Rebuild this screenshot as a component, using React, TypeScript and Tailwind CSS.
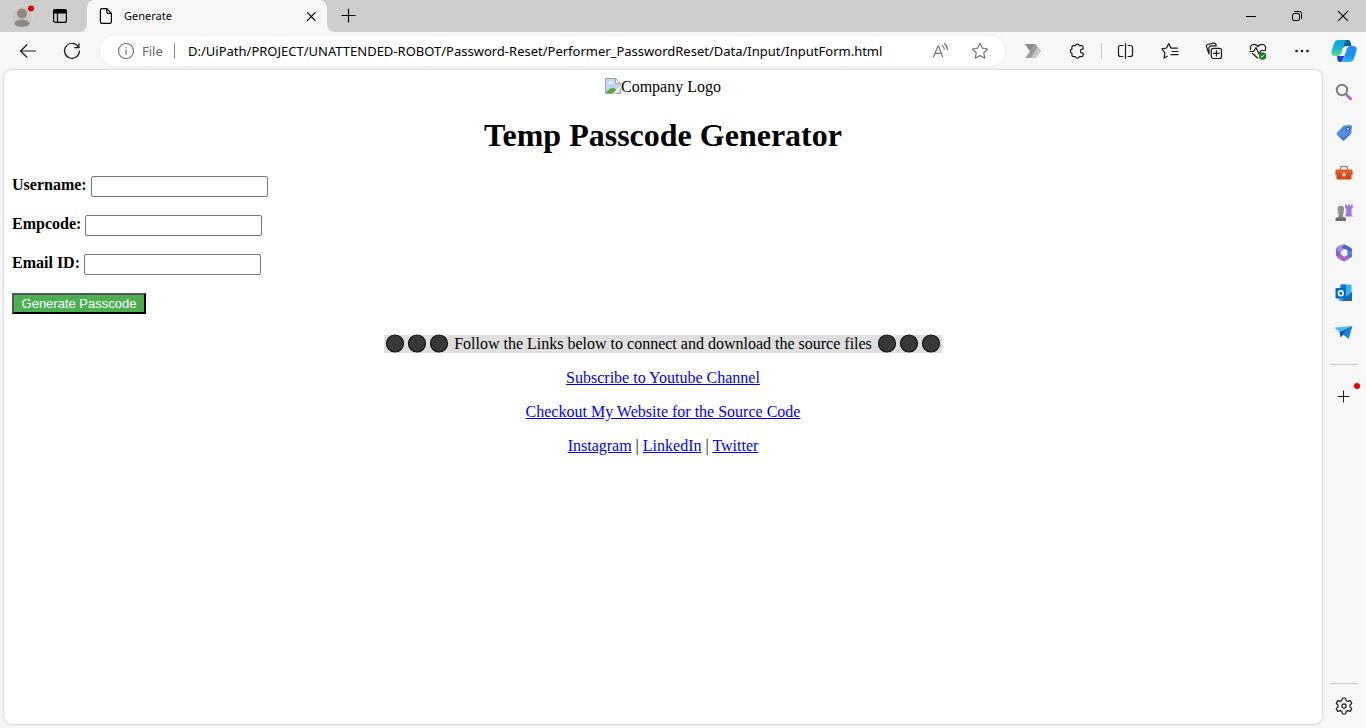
import type { ReactNode } from "react";

type IconProps = { children: ReactNode; size?: string; box?: string; className?: string };

function Icon({ children, size = "size-5", box = "0 0 20 20", className = "" }: IconProps) {
  return (
    <svg
      viewBox={box}
      className={`${size} shrink-0 ${className}`}
      fill="none"
      stroke="currentColor"
      strokeWidth="1.2"
      strokeLinecap="round"
      strokeLinejoin="round"
      aria-hidden="true"
    >
      {children}
    </svg>
  );
}

function IconButton({ label, className = "h-8 w-11", children }: { label: string; className?: string; children: ReactNode }) {
  return (
    <button type="button" aria-label={label} className={`flex shrink-0 items-center justify-center ${className}`}>
      {children}
    </button>
  );
}

function TabStrip() {
  return (
    <header className="flex h-8 shrink-0 bg-[#f7f7f7] text-black">
      <div className="flex w-[87px] shrink-0 items-center rounded-br-lg bg-[#cdcdcd] pl-2.5">
        <IconButton label="Profile" className="size-6">
          <Icon size="size-6" box="0 0 24 24">
            <circle cx="12" cy="12.500" r="10.500" fill="#c9c6c3" stroke="#d8d4cf" strokeWidth="1" />
            <circle cx="12" cy="9.500" r="5" fill="#8e8985" stroke="none" />
            <path d="M4 20c1-3 4-4.500 8-4.500s7 1.500 8 4.500c-2 2-5 3-8 3s-6-1-8-3z" fill="#8e8985" stroke="none" />
            <circle cx="21" cy="4.500" r="3" fill="#e60000" stroke="none" />
          </Icon>
        </IconButton>
        <IconButton label="Tab actions" className="ml-4 size-5">
          <Icon>
            <rect x="3.600" y="3.600" width="12.800" height="12.800" rx="2" />
            <path d="M3.600 5.500q0-2 2-2h8.800q2 0 2 2v1.500H3.600z" fill="currentColor" />
            <path d="M7.500 7v9" />
          </Icon>
        </IconButton>
      </div>
      <div className="w-60 shrink-0 bg-[#cdcdcd]">
        <div className="flex h-8 items-center rounded-t-lg bg-[#f7f7f7] pr-1.5 pl-2">
          <Icon size="size-[22px]" box="0 0 22 22">
            <path d="M7 3.600h4.800l4.600 4.800v8.400q0 1.600-1.600 1.600H7q-1.600 0-1.600-1.600V5.200q0-1.600 1.600-1.600z" />
            <path d="M11.800 3.800v3.400q0 1.200 1.200 1.200h3.200" />
          </Icon>
          <span className="ml-[7px] flex-1 font-['Noto_Sans',sans-serif] text-[11px] leading-4">Generate</span>
          <IconButton label="Close tab" className="size-5">
            <Icon>
              <path d="M6.500 6.700l7.600 7.600M14.100 6.700l-7.600 7.600" />
            </Icon>
          </IconButton>
        </div>
      </div>
      <div className="flex flex-1 items-center rounded-bl-lg bg-[#cdcdcd]">
        <IconButton label="New tab" className="h-8 w-11">
          <Icon>
            <path d="M9.500 3v13M3 9.500h13" />
          </Icon>
        </IconButton>
        <div className="flex-1" />
        <IconButton label="Minimize" className="h-8 w-[46px]">
          <Icon size="size-3" box="0 0 12 12">
            <path d="M1.500 6.500h9" strokeWidth="1" />
          </Icon>
        </IconButton>
        <IconButton label="Restore" className="h-8 w-[46px]">
          <Icon size="size-3" box="0 0 12 12">
            <rect x="1.500" y="3.500" width="7" height="7" rx="1.500" strokeWidth="1" />
            <path d="M3.500 1.500h5q2 0 2 2v5" strokeWidth="1" />
          </Icon>
        </IconButton>
        <IconButton label="Close window" className="h-8 w-[46px]">
          <Icon size="size-3" box="0 0 12 12">
            <path d="M1.300 1.300l9.400 9.400M10.700 1.300l-9.400 9.400" strokeWidth="1.100" />
          </Icon>
        </IconButton>
      </div>
    </header>
  );
}

function Copilot() {
  return (
    <svg viewBox="0 0 26 24" className="h-6 w-[26px]" aria-hidden="true">
      <defs>
        <linearGradient id="cpLeft" x1="0" y1="0" x2="0" y2="1">
          <stop offset="0" stopColor="#0ba6dc" />
          <stop offset="0.500" stopColor="#16b4cf" />
          <stop offset="1" stopColor="#5fe08a" />
        </linearGradient>
        <linearGradient id="cpRight" x1="0" y1="0" x2="0" y2="1">
          <stop offset="0" stopColor="#2f8df5" />
          <stop offset="0.600" stopColor="#1591ee" />
          <stop offset="1" stopColor="#22bdf5" />
        </linearGradient>
      </defs>
      <path d="M12 1h5q2 0 2.600 2.200L20.500 7h-4q-3 0-4 3z" fill="#0a5f94" />
      <path d="M6 17h5l3-3-2 7q-.8 2-2.600 2H9q-2 0-2.600-2.200z" fill="#1b43d6" />
      <path d="M7.500 1h8q-1.500.6-2.200 3l-3 10q-.9 3-4 3H4q-4.500 0-3.400-5L3.200 4Q4.200 1 7.500 1z" fill="url(#cpLeft)" />
      <path d="M18.500 23h-8q1.500-.6 2.200-3l3-10q.9-3 4-3H22q4.500 0 3.400 5L22.800 20q-1 3-4.300 3z" fill="url(#cpRight)" />
      <path d="M15.500 7h2q-1.400.4-2.200 3l-1.900 6.200q-.3.800-1.100.8H8.500q1.500-.3 2.200-3l1.600-5Q13 7 15.500 7z" fill="#f7f7f7" />
    </svg>
  );
}

function Toolbar() {
  return (
    <div className="flex h-[38px] shrink-0 items-center text-[#1a1a1a]">
      <div className="flex w-[100px] shrink-0 pl-1.5">
        <IconButton label="Back">
          <Icon>
            <path d="M17.500 10H2.800M9 3.800L2.500 10 9 16.200" />
          </Icon>
        </IconButton>
        <IconButton label="Refresh">
          <Icon>
            <path d="M16.600 6.200A7.500 7.500 0 1 0 17.500 10M17 2.500v4.200h-4.200" />
          </Icon>
        </IconButton>
      </div>
      <div className="flex h-[30px] min-w-0 flex-1 items-center rounded-full bg-white pr-[15px] pl-4 font-['Noto_Sans',sans-serif] shadow-[0_0_3px_rgba(0,0,0,0.08)]">
        <Icon className="text-[#767676]">
          <circle cx="10" cy="10" r="7.500" />
          <path d="M10 9.200v4.300" />
          <circle cx="10" cy="6.700" r=".7" fill="currentColor" stroke="none" />
        </Icon>
        <span className="ml-1.5 w-8 text-[13px] leading-5 text-[#6b6b6b]">File</span>
        <span className="h-4 w-px bg-[#8a8a8a]" />
        <input
          aria-label="Address"
          defaultValue="D:/UiPath/PROJECT/UNATTENDED-ROBOT/Password-Reset/Performer_PasswordReset/Data/Input/InputForm.html"
          className="ml-[13px] min-w-0 flex-1 bg-transparent text-[13px] leading-5 text-black outline-none"
        />
        <IconButton label="Read aloud" className="size-5">
          <Icon className="text-[#767676]">
            <path d="M3.500 16L8 5h.6l4 11M5 12.300h6.300" />
            <path d="M12 4.200q2 1.400 2.300 4M14.300 2.500q3 2.200 3.200 6.200" />
          </Icon>
        </IconButton>
        <IconButton label="Add to favorites" className="ml-5 size-5">
          <Icon className="text-[#767676]">
            <path d="M10 2.300l2.400 4.900 5.300.8-3.900 3.800.9 5.400L10 14.600l-4.700 2.600.9-5.400L2.300 8l5.300-.8z" />
          </Icon>
        </IconButton>
      </div>
      <nav aria-label="Browser tools" className="ml-1.5 flex shrink-0 items-center">
        <IconButton label="UiPath automation">
          <svg viewBox="0 0 18 16" className="h-4 w-[18px]" aria-hidden="true">
            <path d="M1 1h10.500l5.500 7-5.500 7H1l5-7z" fill="#b5b5b5" />
            <path d="M1 1h10L6 8z" fill="#8b8b8b" />
            <path d="M11 1L2 15h5.500l6-9.500z" fill="#9d9d9d" />
            <path d="M13.500 4L7 15h4.500L17 8z" fill="#c8c8c8" />
          </svg>
        </IconButton>
        <IconButton label="Extensions">
          <Icon>
            <path d="M6.500 4.600h1.900a2 2 0 0 1 3.900 0h2.200q1.600 0 1.600 1.600v2h-1.100a2 2 0 0 0 0 3.900h1.100v2q0 1.600-1.600 1.600h-2.200a2 2 0 0 1-3.900 0H6.500q-1.600 0-1.600-1.600v-2a2 2 0 0 1 0-3.900v-2q0-1.600 1.600-1.600z" />
          </Icon>
        </IconButton>
        <span className="mx-0.5 h-4 w-px bg-[#c9c9c9]" />
        <IconButton label="Split screen">
          <Icon>
            <path d="M7 4.500H4.500q-2 0-2 2v7q0 2 2 2H7M12 4.500h2.500q2 0 2 2v7q0 2-2 2H12M9.500 2.500v15" />
          </Icon>
        </IconButton>
        <IconButton label="Favorites">
          <Icon>
            <path d="M7.300 15.200l-3.200 1.900.8-5.300L2 7.800l4.500-.8L8.800 2.600 11 7.200h6.300M12 10.500h6M11 13.700h7" />
          </Icon>
        </IconButton>
        <IconButton label="Collections">
          <Icon>
            <rect x="7.300" y="7.300" width="10.200" height="10.200" rx="2" />
            <path d="M12.400 9.700v5.400M9.700 12.400h5.400M5 13L2.500 5.700q-.5-1.700 1.100-2.200l6.200-1.300q1.600-.2 2.100 1.300l.3 1.300M5 13V7q.2-2.200 2.300-2.200h4.900" />
          </Icon>
        </IconButton>
        <IconButton label="Browser essentials">
          <Icon>
            <path d="M2.600 8.500Q1.600 5 4.300 3.700 7.500 2.500 10 5.500q2.500-3 5.700-1.800 2.700 1.300 1.700 4.800M4.500 12.500l5 4.500" />
            <path d="M2 10.500h3.500L8 6.500l3 6.500 2-3.500h4.500" />
            <circle cx="14.500" cy="15" r="3.800" fill="#16801a" stroke="none" />
            <path d="M12.900 15.200l1.100 1.100 2-2.300" stroke="#fff" strokeWidth="1" />
          </Icon>
        </IconButton>
        <IconButton label="Settings and more">
          <Icon>
            <g fill="currentColor" stroke="none">
              <circle cx="4.500" cy="10" r="1.300" />
              <circle cx="10" cy="10" r="1.300" />
              <circle cx="15.500" cy="10" r="1.300" />
            </g>
          </Icon>
        </IconButton>
        <IconButton label="Copilot" className="h-8 w-[42px] pr-0.5">
          <Copilot />
        </IconButton>
      </nav>
    </div>
  );
}

function Sidebar() {
  return (
    <aside aria-label="Sidebar" className="flex w-11 shrink-0 flex-col items-center pt-[3px] pb-0.5 text-[#1a1a1a]">
      <IconButton label="Search" className="h-10 w-11">
        <Icon>
          <circle cx="8" cy="7" r="5.200" stroke="#7d7d7d" strokeWidth="2" />
          <path d="M12 11l1.500 1.500" stroke="#7d7d7d" strokeWidth="2" />
          <path d="M13.700 13l2.800 2.800" stroke="#a06bd6" strokeWidth="3" />
        </Icon>
      </IconButton>
      <IconButton label="Shopping" className="h-10 w-11">
        <Icon>
          <path d="M10.500 2.500L16.500 2q1.500.1 1.500 1.600l-.6 6q-.1.700-.6 1.200l-6.300 6.300q-1 1-2 0L3 11.700q-1-1 0-2l6.300-6.600q.5-.5 1.200-.6z" fill="#568be0" stroke="none" />
          <path d="M2.600 11.200l5.900 5.900q1 1 2 0l6.300-6.300.5-1.500L9.600 15z" fill="#4275cc" stroke="none" />
          <circle cx="14" cy="6" r="1.600" fill="#d5e6fb" stroke="#244c91" strokeWidth="1" />
        </Icon>
      </IconButton>
      <IconButton label="Tools" className="h-10 w-11">
        <Icon>
          <path d="M6.500 7V5q0-1.500 1.500-1.500h4q1.500 0 1.500 1.500v2" stroke="#8a8a8a" strokeWidth="1.500" />
          <rect x="1.500" y="6.500" width="17" height="5" rx="1.200" fill="#e85a22" stroke="none" />
          <path d="M2.500 11.500h15v4q0 1-1 1h-13q-1 0-1-1z" fill="#d04a14" stroke="none" />
          <path d="M1.500 11h17" stroke="#b23c0e" strokeWidth="1" />
          <rect x="8.500" y="9.500" width="3" height="4" rx="1.200" fill="#dadada" stroke="none" />
        </Icon>
      </IconButton>
      <IconButton label="Games" className="h-10 w-11">
        <Icon>
          <path d="M11 1.500h2v1.600h1V1.500h2v1.600h1V1.500h1.800V5l-1.300 1v5l1.300 2.500h-7.300V11l.8-1V6L11 5z" fill="#a077d6" stroke="none" />
          <g fill="#8f8f8f" stroke="none">
            <circle cx="6.800" cy="6" r="3.300" />
            <path d="M3.500 8.800h6.600v1.600h-1.300l.7 4.300H4.100l.7-4.300H3.500z" />
            <path d="M1.500 15.700q0-1.500 1.500-1.500h7.500q1.500 0 1.500 1.500V18H1.500z" fill="#6d6d6d" />
          </g>
        </Icon>
      </IconButton>
      <IconButton label="Microsoft 365" className="h-10 w-11">
        <Icon>
          <g stroke="none">
            <path d="M11 1.500L6.500 2 2.700 4.500Q2 5 2 6v6q0 1 .9 1.500L6 15.200l1-7z" fill="#846bd0" />
            <path d="M11 1.500l5.800 3.200q1.200.7 1.200 2V12l-4.500-2.500V7L7 5z" fill="#4b63bf" />
            <path d="M7 5l4-3.500q-2-.5-4 .5L3 4.500Q2 5 2 6l5 3 3-3z" fill="#b28bea" />
            <path d="M18 8v5q0 1-.9 1.500L11 18q-1 .6-2 0l-6-3.500 4-2 3 1.500 3.500-2V8z" fill="#5c79db" />
            <path d="M3 14l4-3 3.500 3L14 12l-1 4.800-2 1.200q-1 .6-2 0z" fill="#b35fcf" />
            <path d="M10 7.200l2.500 1.400v2.900L10 13l-2.500-1.500V8.600z" fill="#f7f7f7" />
          </g>
        </Icon>
      </IconButton>
      <IconButton label="Outlook" className="h-10 w-11">
        <Icon>
          <g stroke="none">
            <rect x="6.500" y="1.500" width="11" height="12" rx="1" fill="#35b8f1" />
            <path d="M6.500 2.500q0-1 1-1H12V8H6.500z" fill="#0b7bd0" />
            <path d="M5 9l7 4 6-4v8q0 1-1 1H6q-1 0-1-1z" fill="#35a9e8" />
            <path d="M18 9v8q0 1-1 1H7z" fill="#1767bd" />
            <rect x="1.500" y="5" width="10.500" height="10.500" rx="1.300" fill="#0869bd" />
          </g>
          <ellipse cx="6.800" cy="10.200" rx="2.300" ry="2.500" stroke="#fff" strokeWidth="1.600" />
        </Icon>
      </IconButton>
      <IconButton label="Drop" className="h-10 w-11">
        <Icon>
          <g stroke="none">
            <path d="M18.500 3L1.500 4.500q-1 .2-.3 1L5.500 9z" fill="#41bdf1" />
            <path d="M18.500 3L5.500 9l1 5.500z" fill="#0a5eaa" />
            <path d="M18.500 3L6.500 14.500l3-3z" fill="#0a4d91" />
            <path d="M18.500 3L8.500 11l5.300 4.500q.8.600 1.200-.4z" fill="#1a87d7" />
          </g>
        </Icon>
      </IconButton>
      <span className="mt-[11px] h-px w-7 bg-[#cbcbcb]" />
      <div className="relative mt-3">
        <IconButton label="Customize sidebar" className="h-10 w-11">
          <Icon>
            <path d="M9.500 4v11M4 9.500h11" strokeWidth="1" />
          </Icon>
        </IconButton>
        <span className="absolute top-1.5 right-1.5 size-1.5 rounded-full bg-[#e60000]" />
      </div>
      <div className="flex-1" />
      <span className="mb-0.5 h-px w-7 bg-[#cbcbcb]" />
      <IconButton label="Settings" className="h-10 w-11">
        <Icon>
          <path d="M8.400 2h3.200l.5 2.400 1.700 1 2.400-.8 1.600 2.800L16 9v2l1.800 1.600-1.600 2.800-2.400-.8-1.700 1-.5 2.400H8.400l-.5-2.400-1.700-1-2.400.8-1.600-2.800L4 11V9L2.200 7.400l1.600-2.800 2.400.8 1.700-1z" />
          <circle cx="10" cy="10" r="2.200" />
        </Icon>
      </IconButton>
    </aside>
  );
}

function Field({ id, label }: { id: string; label: string }) {
  return (
    <div className="flex h-[21px] items-start gap-1">
      <label htmlFor={id} className="font-bold">
        {label}
      </label>
      <input
        id={id}
        type="text"
        className="h-[21px] w-[177px] rounded-xs border border-[#767676] bg-white px-0.5 font-['Liberation_Sans',Arial,sans-serif] text-[13px]"
      />
    </div>
  );
}

function Dots() {
  return (
    <svg viewBox="0 0 66 20" className="-my-px h-5 w-[66px]" aria-hidden="true">
      {[11, 33, 55].map((x) => (
        <circle key={x} cx={x} cy="9.500" r="8.500" fill="#383838" stroke="#111" strokeWidth="1.200" />
      ))}
    </svg>
  );
}

function BrokenImage() {
  return (
    <svg viewBox="0 0 16 16" className="size-4" aria-hidden="true">
      <path d="M.5.500h10l5 5v10H.5z" fill="#c1d5f5" stroke="#a3a3a3" />
      <path d="M10.500.500v5h5z" fill="#fff" stroke="#a3a3a3" />
      <path d="M3 5.500q0-1.500 1.500-1.500Q5.500 2.500 7 4q1.500 0 1.500 1.500z" fill="#fff" />
      <path d="M1 15q3-5.500 8-5l3 2-3 3z" fill="#58ab3b" />
      <path d="M16 7L7.500 16H10l6-6.500z" fill="#fff" />
      <path d="M11 15.500h4.500V11" fill="none" stroke="#a3a3a3" />
    </svg>
  );
}

const linkClass = "text-[#0000ee] underline";

function FormPage() {
  return (
    <main className="ml-1 min-w-0 flex-1 rounded-lg bg-white p-2 font-['Liberation_Serif','Times_New_Roman',serif] text-[16px] leading-[18px] text-black shadow-[0_0_3px_rgba(0,0,0,0.25)]">
      <div className="flex justify-center">
        <BrokenImage />
        <span>Company Logo</span>
      </div>
      <h1 className="mt-[21px] text-center text-[32px] leading-9 font-bold">Temp Passcode Generator</h1>
      <form className="mt-[23px] flex flex-col items-start gap-[18px]" onSubmit={(e) => e.preventDefault()}>
        <Field id="username" label="Username:" />
        <Field id="empcode" label="Empcode:" />
        <Field id="email" label="Email ID:" />
        <button
          type="submit"
          className="h-[21px] w-[134px] border-2 border-t-[#555] border-r-black border-b-black border-l-[#555] bg-[#4caf50] font-['Liberation_Sans',Arial,sans-serif] text-[13px] leading-4 text-white"
        >
          Generate Passcode
        </button>
      </form>
      <div className="mt-[21px] flex flex-col items-center gap-4">
        <p className="flex h-[18px] items-center gap-1 bg-[#dedede]">
          <Dots />
          <span>Follow the Links below to connect and download the source files</span>
          <Dots />
        </p>
        <a href="#youtube" className={linkClass}>
          Subscribe to Youtube Channel
        </a>
        <a href="#website" className={linkClass}>
          Checkout My Website for the Source Code
        </a>
        <p>
          <a href="#instagram" className={linkClass}>
            Instagram
          </a>
          {" | "}
          <a href="#linkedin" className={linkClass}>
            LinkedIn
          </a>
          {" | "}
          <a href="#twitter" className={linkClass}>
            Twitter
          </a>
        </p>
      </div>
    </main>
  );
}

export default function App() {
  return (
    <div className="flex min-h-screen flex-col bg-[#f7f7f7]">
      <TabStrip />
      <Toolbar />
      <div className="flex flex-1">
        <div className="flex min-w-0 flex-1 pb-1">
          <FormPage />
        </div>
        <Sidebar />
      </div>
    </div>
  );
}
